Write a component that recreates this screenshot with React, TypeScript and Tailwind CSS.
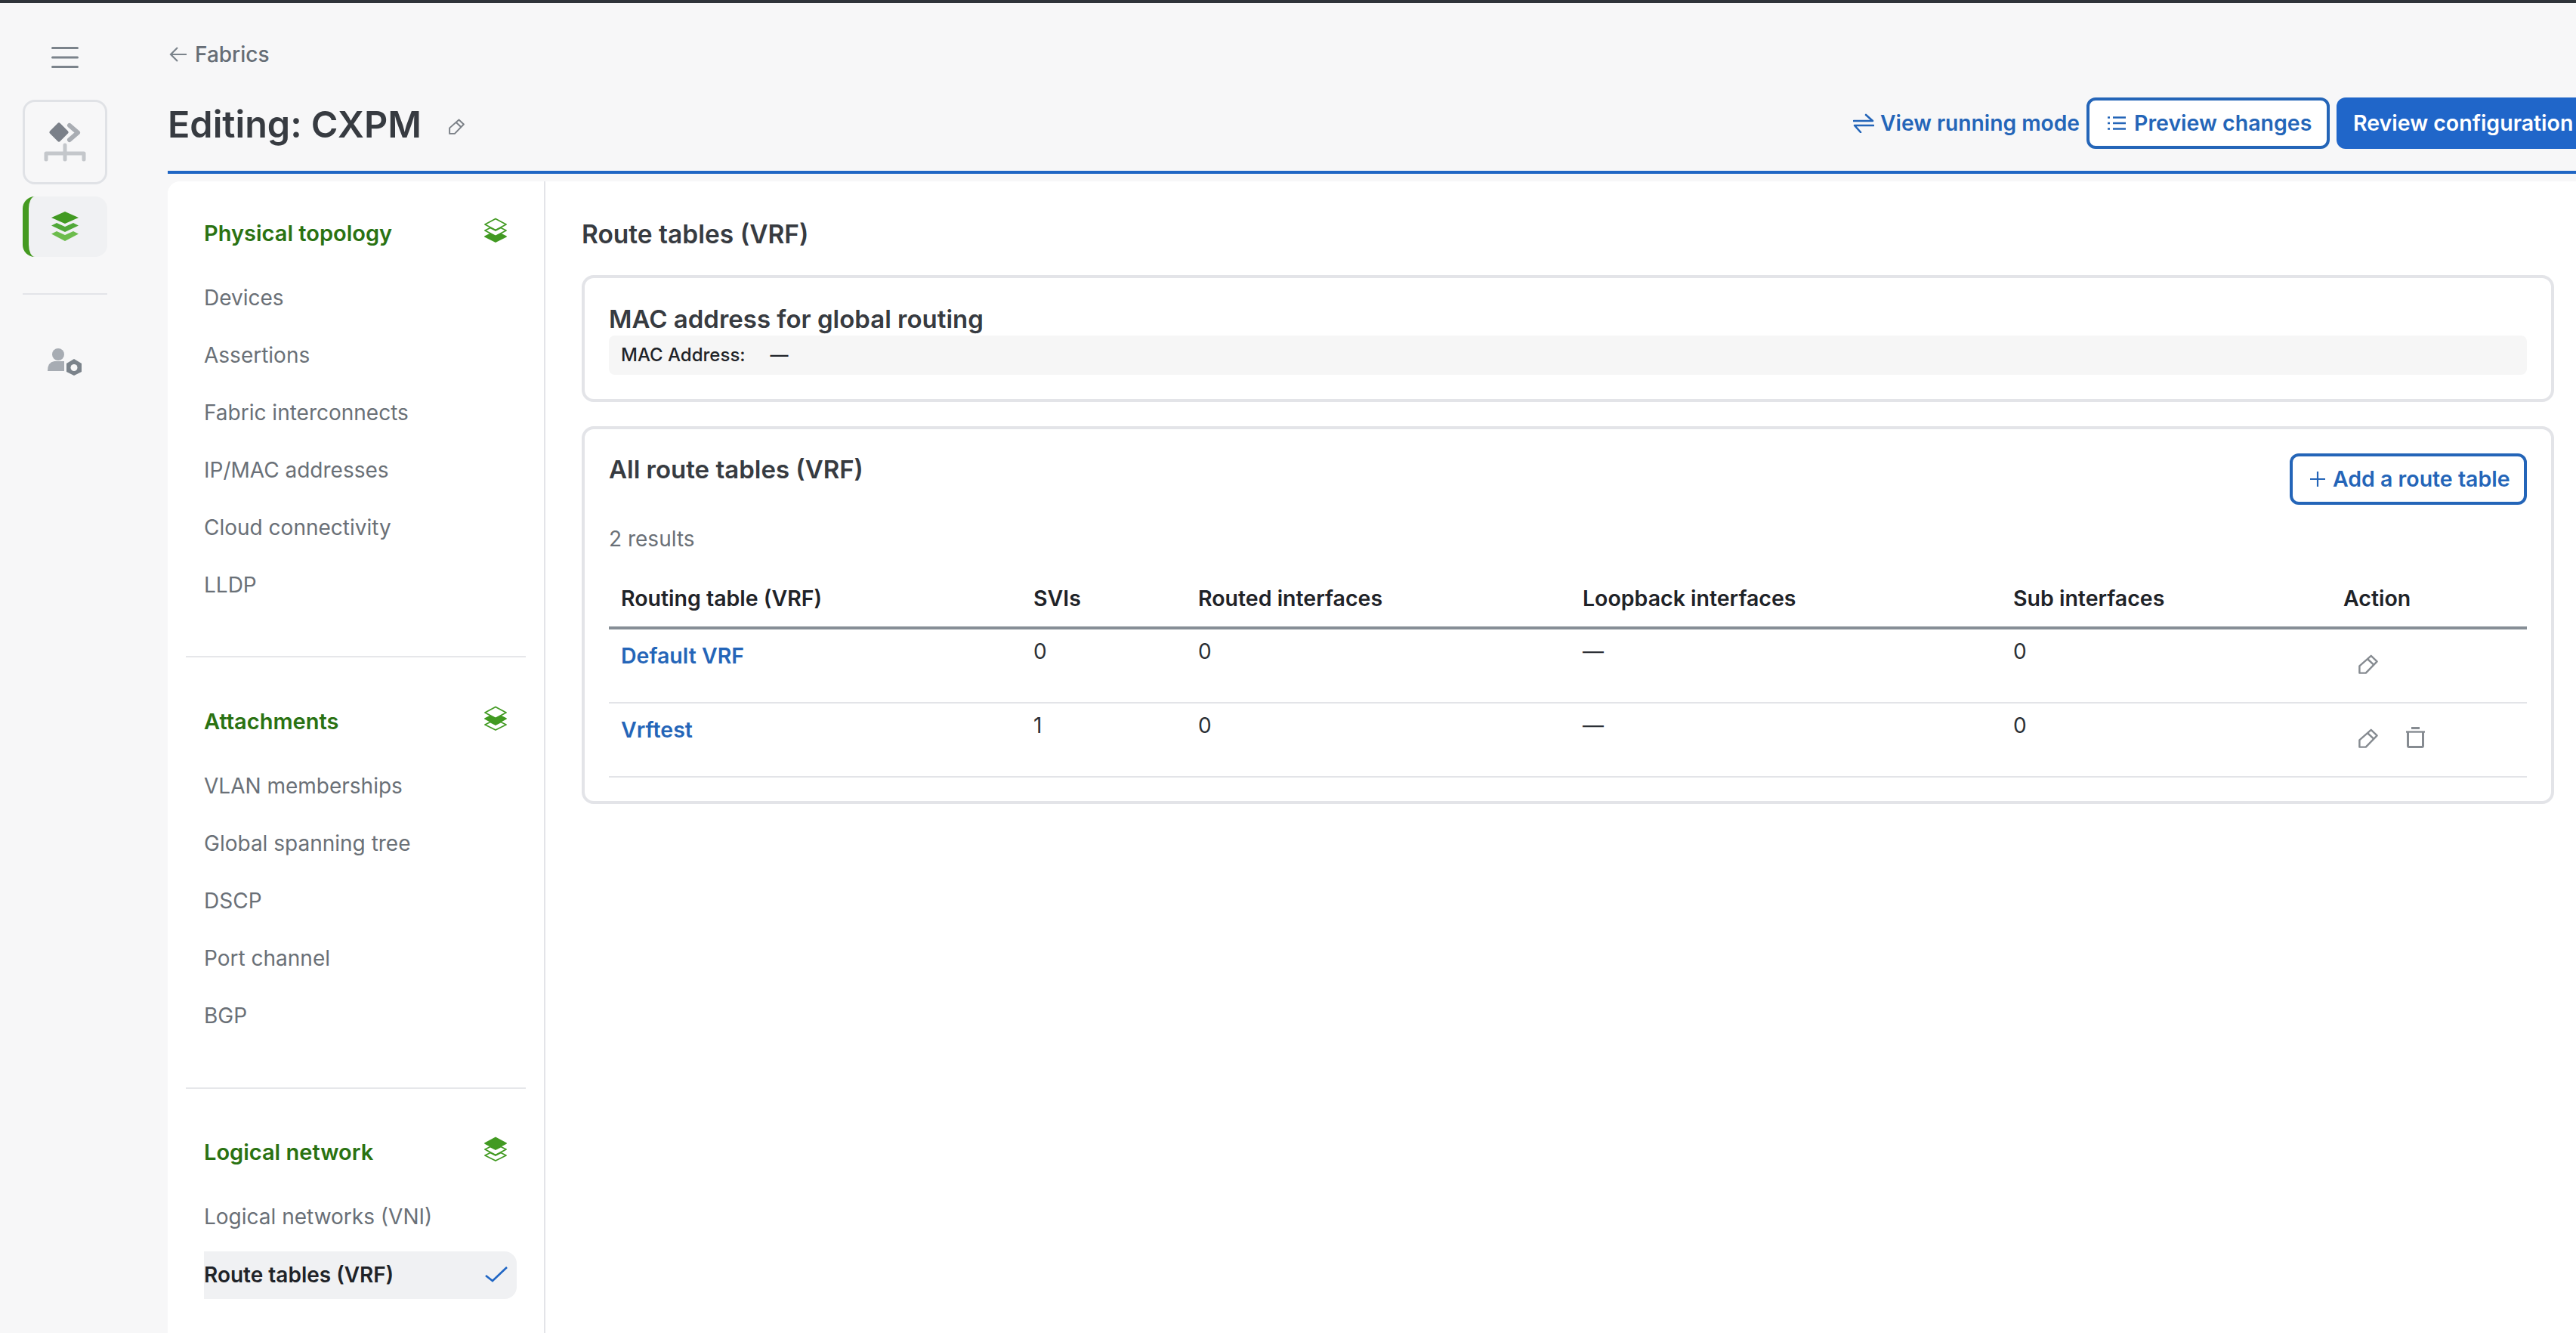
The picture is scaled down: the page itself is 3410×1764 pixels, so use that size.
import { ReactNode } from 'react'

const physical = ['Devices', 'Assertions', 'Fabric interconnects', 'IP/MAC addresses', 'Cloud connectivity', 'LLDP']
const attachments = ['VLAN memberships', 'Global spanning tree', 'DSCP', 'Port channel', 'BGP']

const rows = [
  { name: 'Default VRF', svis: '0', routed: '0', loopback: '—', sub: '0', canDelete: false },
  { name: 'Vrftest', svis: '1', routed: '0', loopback: '—', sub: '0', canDelete: true },
]

const gridCols = 'grid grid-cols-[546px_218px_509px_570px_437px_244px] pl-4'

function PencilIcon({ className }: { className?: string }) {
  return (
    <svg viewBox="0 0 28 28" fill="none" stroke="currentColor" strokeWidth="2.6" strokeLinejoin="round" className={className}>
      <path d="M18 2 L26.5 10 L10.5 26.5 L1.5 26.5 L1.5 16.5 Z" />
      <path d="M13.5 7 L22 15" />
    </svg>
  )
}

function TrashIcon({ className }: { className?: string }) {
  return (
    <svg viewBox="0 0 25 28" fill="none" stroke="currentColor" className={className}>
      <path d="M7 1.5 H18" strokeWidth="3" />
      <path d="M0 6.5 H25" strokeWidth="2.4" />
      <path d="M2.5 7 V25 Q2.5 26.5 4 26.5 H21 Q22.5 26.5 22.5 25 V7" strokeWidth="3" />
    </svg>
  )
}

// solid: which of the three layers is filled
function StackIcon({ solid }: { solid: 0 | 1 | 2 }) {
  const layers = ['M16 1.5 L30 9 L16 16.5 L2 9 Z', 'M9 13.5 L2 17 L16 24.5 L30 17 L23 13.5 L16 17 Z', 'M9 21.5 L2 25 L16 32 L30 25 L23 21.5 L16 25 Z']
  return (
    <svg viewBox="0 0 32 34" className="w-8 h-[34px] text-[#429a22]" stroke="currentColor" strokeWidth="1.8" strokeLinejoin="round">
      {layers.map((d, i) => (
        <path key={d} d={d} fill={i === solid ? 'currentColor' : 'none'} />
      ))}
    </svg>
  )
}

function NavHeading({ title, solid }: { title: string; solid: 0 | 1 | 2 }) {
  return (
    <div className="flex items-center justify-between h-11 pl-6 pr-6">
      <span className="text-[29px] font-semibold text-[#2a7212]">{title}</span>
      <span className="-mt-[9px]"><StackIcon solid={solid} /></span>
    </div>
  )
}

function NavItem({ label }: { label: string }) {
  return <div className="h-[76px] flex items-center pl-6 text-[28px] text-[#6a7077]">{label}</div>
}

function Card({ children, className }: { children: ReactNode; className?: string }) {
  return <div className={'border-4 border-[#e3e4e8] rounded-2xl px-8 bg-white ' + (className ?? '')}>{children}</div>
}

function OutlineButton({ children }: { children: ReactNode }) {
  return (
    <button className="h-[68px] flex items-center border-4 border-[#2465b8] rounded-xl bg-white text-[#2465b8] text-[28.5px] font-semibold">
      {children}
    </button>
  )
}

export default function App() {
  return (
    <div className="w-[3410px] h-[1764px] overflow-hidden flex flex-col bg-[#f7f7f8] [font-family:Inter,sans-serif]">
      <div className="h-1 bg-[#2f343a] shrink-0" />
      <div className="flex flex-1 min-h-0">
        {/* Rail */}
        <aside className="w-[222px] shrink-0 pl-[30px] pt-[58px]">
          <div className="w-28 flex flex-col items-center">
            <svg viewBox="0 0 36 28" className="w-9 h-7 text-[#7b838b]" stroke="currentColor" strokeWidth="3" strokeLinecap="round">
              <path d="M1.5 1.5 H34.5 M1.5 14 H34.5 M1.5 26.5 H34.5" />
            </svg>
            <div className="mt-[42px] w-28 h-28 border-[3px] border-[#e0e2e6] rounded-2xl flex items-center justify-center">
              <svg viewBox="0 0 56 52" className="w-14 h-[52px]" fill="none" strokeLinejoin="round" strokeLinecap="round">
                <path d="M20 3 L30 13 L20 23 L10 13 Z" fill="#7b8089" stroke="#7b8089" strokeWidth="5" />
                <path d="M34 4 L45 13.5 L34 23" stroke="#a9adb3" strokeWidth="6" />
                <path d="M3 49 V41 H53 V49 M28 30 V49" stroke="#c4c7cb" strokeWidth="5" />
              </svg>
            </div>
            <div className="mt-4 w-28 h-20 rounded-2xl bg-[#f0f1f3] border-l-8 border-[#459a21] flex items-center justify-center pr-2">
              <svg viewBox="0 0 36 40" className="w-9 h-10">
                <path d="M18 0 L36 8 L18 16 L0 8 Z" fill="#429a22" />
                <path d="M7 15 L0 18.5 L18 27 L36 18.5 L29 15 L18 20 Z" fill="#50a838" />
                <path d="M7 26 L0 29.5 L18 39 L36 29.5 L29 26 L18 31 Z" fill="#6cbc4c" />
              </svg>
            </div>
            <div className="mt-12 w-28 h-0.5 bg-[#e3e4e8]" />
            <svg viewBox="0 0 46 36" className="mt-[71px] w-[46px] h-9">
              <circle cx="14" cy="8" r="8" fill="#a7acb3" />
              <path d="M0 30 Q0 18 9 17 H22 V30 Z" fill="#a7acb3" />
              <path d="M35 14 L45 20 V31 L35 36 L25 31 V20 Z" fill="#7b838b" />
              <circle cx="35" cy="25.5" r="4.5" fill="#f7f7f8" />
            </svg>
          </div>
        </aside>

        {/* Main column */}
        <div className="flex-1 min-w-0 flex flex-col">
          <div className="pt-12 shrink-0">
            <div className="flex items-center h-10 text-[28px] font-medium text-[#666d75]">
              <svg viewBox="0 0 24 22" fill="none" stroke="#7b838b" strokeWidth="2.2" className="ml-0.5 w-6 h-[22px]">
                <path d="M23 11 H2 M11 2 L2 11 L11 20" />
              </svg>
              <span className="ml-[10px]">Fabrics</span>
            </div>
            <div className="mt-[37px] h-[68px] flex items-center">
              <h1 className="mt-1 text-[48.5px] font-semibold text-[#373b41]">Editing: CXPM</h1>
              <PencilIcon className="ml-9 mt-2 w-[21px] h-[21px] text-[#7b8087]" />
              <div className="ml-auto flex items-center">
                <button className="flex items-center text-[#2465b8] text-[28.2px] font-semibold mr-[9px]">
                  <svg viewBox="0 0 28 26" fill="none" stroke="currentColor" strokeWidth="2.6" className="w-7 h-[26px] mr-[8px]" strokeLinecap="round" strokeLinejoin="round">
                    <path d="M1 10 H26 L17 2 M27 16 H2 L10 25" />
                  </svg>
                  View running mode
                </button>
                <OutlineButton>
                  <span className="w-[314px] flex items-center pl-6 whitespace-nowrap">
                    <svg viewBox="0 0 24 20" fill="none" stroke="currentColor" strokeWidth="2.4" className="w-6 h-5 mr-[11px]">
                      <path d="M0 2.5 H3 M0 10 H3 M0 17.5 H3 M7 2.5 H24 M7 10 H24 M7 17.5 H24" />
                    </svg>
                    Preview changes
                  </span>
                </OutlineButton>
                <button className="ml-[9px] w-[317px] h-[68px] rounded-l-xl bg-[#2066c9] text-white text-[28.5px] font-semibold text-left pl-[22px] whitespace-nowrap">
                  Review configuration
                </button>
              </div>
            </div>
            <div className="mt-[29px] h-1 bg-[#2066c4]" />
          </div>

          {/* Panel */}
          <div className="mt-[10px] flex-1 min-h-0 flex bg-white rounded-tl-2xl overflow-hidden">
            <nav className="w-[500px] shrink-0 border-r-2 border-[#e3e4e8] px-6 pt-[47px]">
              <NavHeading title="Physical topology" solid={2} />
              <div className="mt-[25px]">
                {physical.map((p) => <NavItem key={p} label={p} />)}
              </div>
              <div className="mt-14 h-0.5 bg-[#e6e7ea]" />
              <div className="mt-[63px]"><NavHeading title="Attachments" solid={1} /></div>
              <div className="mt-[25px]">
                {attachments.map((p) => <NavItem key={p} label={p} />)}
              </div>
              <div className="mt-[57px] h-0.5 bg-[#e6e7ea]" />
              <div className="mt-[62px]"><NavHeading title="Logical network" solid={0} /></div>
              <div className="mt-[25px]">
                <NavItem label="Logical networks (VNI)" />
                <div className="mt-2 ml-6 mr-3 h-[63px] rounded-r-2xl bg-[#f0f1f3] flex items-center justify-between pr-3">
                  <span className="-mt-0.5 text-[28px] font-semibold text-[#1f2328]">Route tables (VRF)</span>
                  <svg viewBox="0 0 30 22" fill="none" stroke="#2066c4" strokeWidth="2.6" className="-mt-1 w-[30px] h-[22px]">
                    <path d="M1 13 L10 20 L29 2" />
                  </svg>
                </div>
              </div>
            </nav>

            <main className="flex-1 min-w-0 pl-12 pr-[29px] pt-12">
              <h2 className="h-11 leading-[44px] text-[33.5px] font-semibold text-[#373b41]">Route tables (VRF)</h2>

              <Card className="mt-8 pt-[34px] pb-8">
                <h3 className="h-[42px] leading-[40px] text-[33px] font-semibold text-[#373b41]">MAC address for global routing</h3>
                <div className="h-[52px] rounded-lg bg-[#f6f6f6] flex items-center pl-4 text-[24px] font-medium text-[#1f2328]">
                  <span>MAC Address:</span>
                  <span className="ml-[33px]">—</span>
                </div>
              </Card>

              <Card className="mt-8 pt-8 pb-[31px]">
                <div className="flex items-start justify-between">
                  <h3 className="h-11 leading-[43px] text-[33px] font-semibold text-[#373b41]">All route tables (VRF)</h3>
                  <OutlineButton>
                    <span className="w-[306px] flex items-center pl-[23px] whitespace-nowrap">
                      <svg viewBox="0 0 20 20" fill="none" stroke="currentColor" strokeWidth="2.2" className="w-5 h-5 mr-[10px]">
                        <path d="M10 0 V20 M0 10 H20" />
                      </svg>
                      Add a route table
                    </span>
                  </OutlineButton>
                </div>
                <div className="mt-[25px] leading-10 text-[28px] text-[#6a7077]">2 results</div>

                <div className={gridCols + ' h-[100px] items-end pb-[15px] border-b-4 border-[#868e96] text-[28.5px] font-semibold text-[#1f2328]'}>
                  <div>Routing table (VRF)</div>
                  <div>SVIs</div>
                  <div>Routed interfaces</div>
                  <div>Loopback interfaces</div>
                  <div>Sub interfaces</div>
                  <div>Action</div>
                </div>

                {rows.map((r) => (
                  <div key={r.name} className={gridCols + ' h-[98px] border-b-2 border-[#e3e4e8] text-[28px] text-[#2c3036] leading-10 pt-[9px]'}>
                    <div className="pt-[6px] text-[28.5px] font-semibold text-[#2465b8]">{r.name}</div>
                    <div>{r.svis}</div>
                    <div>{r.routed}</div>
                    <div>{r.loopback}</div>
                    <div>{r.sub}</div>
                    <div className="flex items-start gap-[37px] pl-5 pt-6 text-[#868b91]">
                      <PencilIcon className="w-[26px] h-[26px]" />
                      {r.canDelete && <TrashIcon className="w-[25px] h-7 -mt-[2px]" />}
                    </div>
                  </div>
                ))}
              </Card>
            </main>
          </div>
        </div>
      </div>
    </div>
  )
}
